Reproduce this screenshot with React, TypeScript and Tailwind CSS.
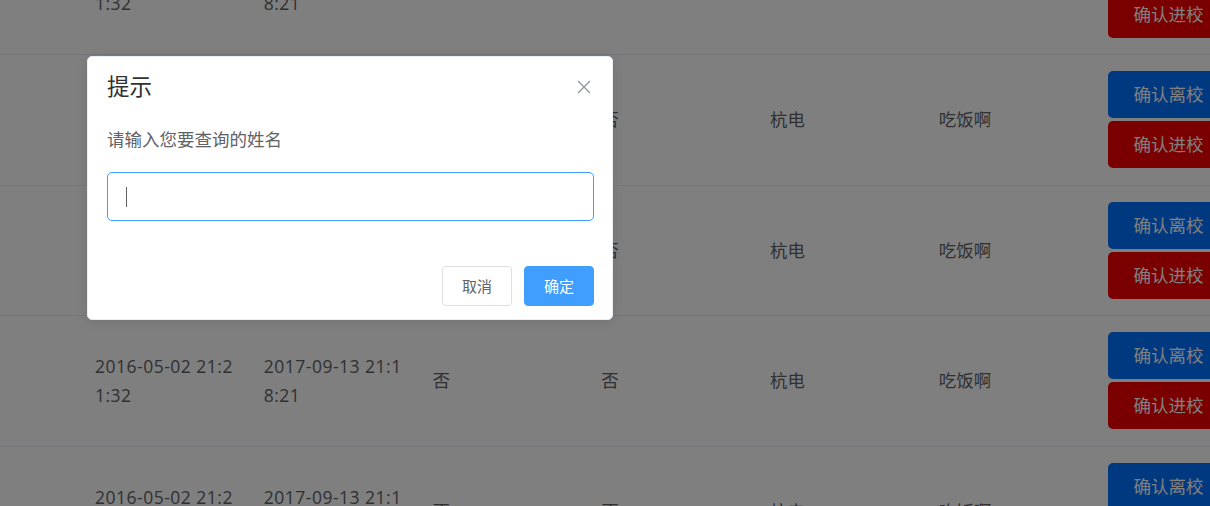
import React from 'react';

const records = [1, 2, 3, 4, 5].map((id) => ({
  id,
  inTime: '2016-05-02 21:21:32',
  outTime: '2017-09-13 21:18:21',
  late: '否',
  leave: '否',
  school: '杭电',
  reason: '吃饭啊',
}));

const RecordRow: React.FC<{ record: (typeof records)[number] }> = ({ record }) => (
  <div className="grid grid-cols-[82.5px_repeat(7,168.75px)] items-center border-b border-[#ebeef5] text-[17.5px] leading-[28.75px] text-[#606266]">
    <div />
    <div className="px-[12.5px] break-all tracking-[0.5px]">{record.inTime}</div>
    <div className="px-[12.5px] break-all tracking-[0.5px]">{record.outTime}</div>
    <div className="px-[12.5px]">{record.late}</div>
    <div className="px-[12.5px]">{record.leave}</div>
    <div className="px-[12.5px]">{record.school}</div>
    <div className="px-[12.5px]">{record.reason}</div>
    <div className="flex flex-col gap-[3px] px-[12.5px] py-[16.25px]">
      <button className="h-[47px] w-[122px] rounded-[5px] bg-[#0072ff] text-[17.5px] leading-none text-white">
        确认离校
      </button>
      <button className="h-[47px] w-[122px] rounded-[5px] bg-[#f40000] text-[17.5px] leading-none text-white">
        确认进校
      </button>
    </div>
  </div>
);

const PromptBox: React.FC = () => (
  <div className="absolute left-[87px] top-[56px] w-[526px] rounded-[5px] border border-[#ebeef5] bg-white shadow-[0_2px_12px_rgba(0,0,0,0.1)]">
    <div className="pl-[19px] pr-[18px] pt-[19px] pb-[12.5px]">
      <div className="text-[22.5px] leading-[22.5px] text-[#303133]">提示</div>
    </div>
    <button className="absolute right-[21px] top-[23px] text-[#909399]" aria-label="close">
      <svg width="14" height="14" viewBox="0 0 14 14" fill="none" stroke="currentColor" strokeWidth="1.3">
        <path d="M1 1L13 13M13 1L1 13" />
      </svg>
    </button>
    <div className="pl-[19px] pr-[18px] pt-[12.5px]">
      <p className="text-[17.5px] leading-[30px] text-[#606266]">请输入您要查询的姓名</p>
      <div className="mt-[18.5px] flex h-[49px] items-center rounded-[5px] border border-[#409eff] pl-[18px]">
        <span className="h-[20px] w-px bg-[#606266]" />
      </div>
    </div>
    <div className="mt-[45px] flex justify-end gap-[12px] pl-[19px] pr-[18px] pb-[13px]">
      <button className="h-[40px] w-[70px] rounded-[4px] border border-[#dcdfe6] bg-white text-[15px] text-[#606266]">
        取消
      </button>
      <button className="h-[40px] w-[70px] rounded-[4px] border border-[#409eff] bg-[#409eff] text-[15px] text-white">
        确定
      </button>
    </div>
  </div>
);

export default function App() {
  return (
    <div className="relative h-[506px] w-[1210px] overflow-hidden bg-white font-['Open_Sans','Noto_Sans_CJK_SC',sans-serif]">
      <div className="-mt-[75.5px] w-[1433px]">
        {records.map((record) => (
          <RecordRow key={record.id} record={record} />
        ))}
      </div>
      <div className="absolute inset-0 bg-black/50" />
      <PromptBox />
    </div>
  );
}
